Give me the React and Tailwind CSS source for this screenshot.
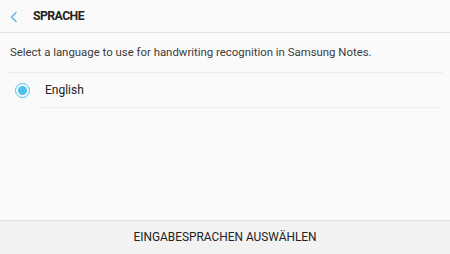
export default function App() {
  return (
    <div className="w-[450px] h-[254px] flex flex-col bg-[#fafafa] overflow-hidden" style={{ fontFamily: "Roboto, 'Liberation Sans', sans-serif" }}>
      <div className="h-[33px] flex items-center border-b border-[#e3e3e3] shrink-0">
        <svg width="8" height="12" viewBox="0 0 8 12" className="ml-[10px] mt-px">
          <path d="M6.5 1 L1.5 6 L6.5 11" fill="none" stroke="#4fb6e6" strokeWidth="1.3" />
        </svg>
        <span className="ml-[15px] mt-px text-[12.3px] font-bold tracking-[-0.6px] text-[#222]">SPRACHE</span>
      </div>
      <div className="flex-1 flex flex-col">
        <div className="h-[39px] flex items-center pl-[10px] text-[11.4px] text-[#3a3a3a]">
          Select a language to use for handwriting recognition in Samsung Notes.
        </div>
        <div className="mx-[7px] h-px bg-[#ececec]" />
        <div className="h-[34px] flex items-center">
          <div className="ml-[15px] w-[15px] h-[15px] rounded-full border-[1.5px] border-[#4fc0ec] flex items-center justify-center">
            <div className="w-[9px] h-[9px] rounded-full bg-[#4fc0ec]" />
          </div>
          <span className="ml-[15px] text-[12px] text-[#222]">English</span>
        </div>
        <div className="ml-[40px] mr-[7px] h-px bg-[#f0f0f0]" />
      </div>
      <div className="h-[34px] shrink-0 border-t border-[#e0e0e0] bg-[#f2f2f2] flex items-center justify-center text-[11.9px] text-[#222]">
        EINGABESPRACHEN AUSWÄHLEN
      </div>
    </div>
  );
}
